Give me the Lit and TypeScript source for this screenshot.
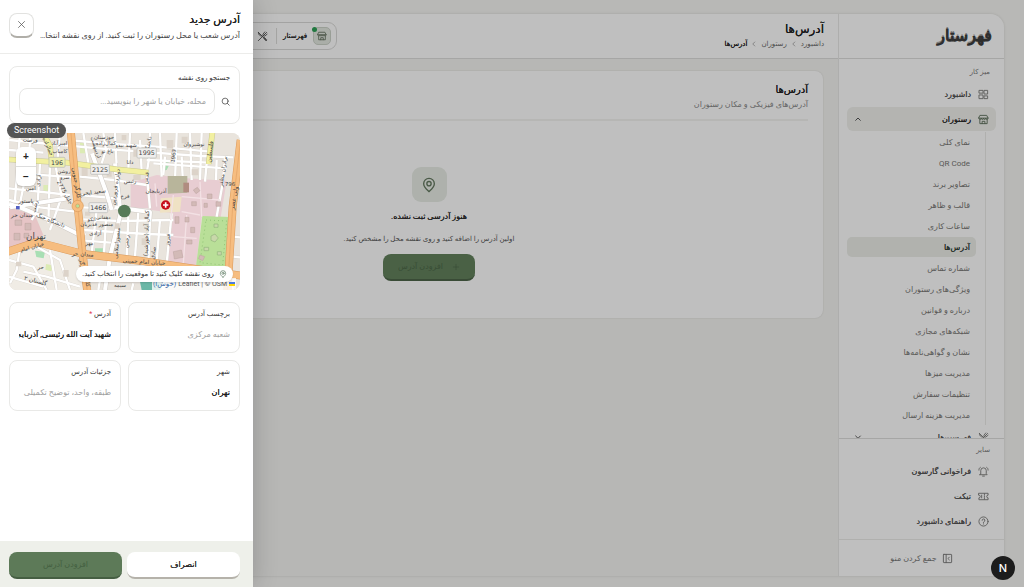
import { LitElement, html, svg, css, nothing } from "lit";
import { customElement } from "lit/decorators.js";
import { classMap } from "lit/directives/class-map.js";

const shapes = {
  grid: svg`<rect x="3" y="3" width="8" height="6"/><rect x="14" y="3" width="7" height="8"/><rect x="3" y="13" width="8" height="8"/><rect x="14" y="15" width="7" height="6"/>`,
  store: svg`<path d="M5 3h14l3 6H2zM2 9c0 4 5 4 5 0 0 4 5 4 5 0 0 4 5 4 5 0 0 4 5 4 5 0M4 12v9h16v-9M9 21v-5h6v5"/>`,
  bell: svg`<path d="M6 17V10a6 6 0 0 1 12 0v7l2 2H4zM10 22h4M2 9c0-3 1-5 3-6M22 9c0-3-1-5-3-6"/>`,
  ticket: svg`<path d="M2 5h20v4a3 3 0 0 0 0 6v4H2v-4a3 3 0 0 0 0-6zM14 6v3M14 11v3M14 16v2M8 9v6"/>`,
  help: svg`<circle cx="12" cy="12" r="10"/><path d="M9 9.500a3 3 0 1 1 4 2.800c-1 .5-1 1-1 2M12 17v.6"/>`,
  collapse: svg`<rect x="3" y="3" width="18" height="18" rx="1"/><path d="M9 3v18M16 9l-3 3 3 3"/>`,
  utensils: svg`<path d="M3 3l18 18M21 3L3 21M3 3c0 5 3 8 7 8M17 2l-4 5c-1 3 1 5 4 4l5-4M19 5l-4 4M14 15l5 6 2-2-5-5"/>`,
  pin: svg`<path d="M12 22c-3-3-8-7-8-12a8 8 0 0 1 16 0c0 5-5 9-8 12z"/><circle cx="12" cy="10" r="3.200"/>`,
  search: svg`<circle cx="11" cy="11" r="8"/><path d="M17 17l5 5"/>`,
  close: svg`<path d="M4 4l16 16M20 4L4 20"/>`,
  plus: svg`<path d="M12 4v16M4 12h16"/>`,
  up: svg`<path d="M5 16l7-7 7 7"/>`,
  down: svg`<path d="M5 9l7 7 7-7"/>`,
  prev: svg`<path d="M15 4l-8 8 8 8"/>`,
};
type IconName = keyof typeof shapes;
const icon = (name: IconName, cls = "") =>
  html`<svg class="icon ${cls}" viewBox="0 0 24 24" aria-hidden="true">${shapes[name]}</svg>`;

const base = css`
  *, *::before, *::after { box-sizing: border-box; }
  :host { font-family: Roboto, "DejaVu Sans", sans-serif; color: #2b2b2b; }
  h1, h2, h3, p, ul, ol { margin: 0; padding: 0; list-style: none; font-weight: 400; }
  button, input { font: inherit; color: inherit; border: 0; background: none; padding: 0; margin: 0; }
  a { color: inherit; text-decoration: none; }
  .icon { display: block; flex: none; width: 11px; height: 11px; fill: none; stroke: currentColor; stroke-width: 2; stroke-linecap: round; stroke-linejoin: round; }
  .strong { text-shadow: 0 0 0 currentColor; }
`;

const restaurantPages = [
  "نمای کلی", "QR Code", "تصاویر برند", "قالب و ظاهر", "ساعات کاری", "آدرس‌ها", "شماره تماس",
  "ویژگی‌های رستوران", "درباره و قوانین", "شبکه‌های مجازی", "نشان و گواهی‌نامه‌ها", "مدیریت میزها",
  "تنظیمات سفارش", "مدیریت هزینه ارسال",
];

@customElement("side-nav")
class SideNav extends LitElement {
  static styles = [base, css`
    :host { display: flex; flex-direction: column; width: 166px; flex: none; background: #fff; border-left: 1px solid #e9e9e7; min-height: 0; }
    .brand { height: 45px; flex: none; padding: 0 12px; display: flex; align-items: center; border-bottom: 1px solid #dededc; }
    .logo { font-size: 16px; line-height: 24px; color: #3c3c3c; -webkit-text-stroke: 1px #3c3c3c; text-shadow: 0 -2px 0 #a8a8a8; }
    .menu { flex: 1; min-height: 0; overflow: hidden; padding: 7px 8px 0; }
    .caption { font-size: 7px; line-height: 12px; color: #777; padding: 0 6px; margin-bottom: 4px; }
    .item { display: flex; align-items: center; gap: 7px; height: 24px; padding: 0 7px; margin-bottom: 1px; border-radius: 6px; font-size: 8px; color: #555; }
    .item .icon { color: #7c7c7a; }
    .open { background: #f0f1ed; color: #2b2b2b; }
    .open .icon { color: #5d6e5a; }
    .item .chevron { width: 8px; height: 8px; margin-inline-start: auto; stroke-width: 3; color: #555; }
    .sub { margin: 0 10px 0 0; border-right: 1px solid #ebebe9; padding-right: 9px; display: grid; gap: 1px; }
    .page { display: block; height: 20px; line-height: 21px; padding: 0 6px; font-size: 8px; color: #777673; border-radius: 5px; }
    .current { background: #eceee9; color: #34423a; text-shadow: 0 0 0 currentColor; }
    .other { border-top: 1px solid #dededc; padding: 5px 8px 5px; flex: none; }
    .other .caption { margin-bottom: 3px; }
    .fold { flex: none; height: 37px; border-top: 1px solid #ebebe9; display: flex; align-items: center; justify-content: center; gap: 5px; font-size: 8px; color: #777; width: 100%; }
  `];
  render() {
    return html`
      <div class="brand"><a class="logo" href="#">فهرستار</a></div>
      <nav class="menu">
        <p class="caption">میز کار</p>
        <a class="item strong" href="#">${icon("grid")}داشبورد</a>
        <a class="item open strong" href="#">${icon("store")}رستوران ${icon("up", "chevron")}</a>
        <ul class="sub">
          ${restaurantPages.map((p) => html`<li><a href="#" class=${classMap({ page: true, current: p === "آدرس‌ها" })}>${p}</a></li>`)}
        </ul>
        <a class="item strong" href="#">${icon("utensils")}فهرست‌ها ${icon("down", "chevron")}</a>
      </nav>
      <nav class="other">
        <p class="caption">سایر</p>
        <a class="item strong" href="#">${icon("bell")}فراخوانی گارسون</a>
        <a class="item strong" href="#">${icon("ticket")}تیکت</a>
        <a class="item strong" href="#">${icon("help")}راهنمای داشبورد</a>
      </nav>
      <button class="fold">${icon("collapse")}جمع کردن منو</button>`;
  }
}

const local = [
  "M27 60L150 72L330 88L600 108L700 112", "M27 90L130 98", "M60 39L45 240L27 262", "M92 39L85 130L60 250", "M120 130L112 270L95 300",
  "M27 205L210 225", "M60 160L220 172", "M180 39L172 125", "M165 130L185 230L150 330", "M27 240L120 262L225 275", "M150 130L145 310",
  "M225 62L340 72L470 80L630 95", "M240 170L340 180L440 195", "M238 225L350 235", "M245 262L450 270", "M250 298L360 303L520 300",
  "M250 330L440 342L520 345", "M255 362L360 370", "M250 39L265 130", "M310 39L318 90L305 130", "M345 39L350 140", "M390 39L385 150", "M420 60L425 155",
  "M450 39L448 110L440 160L450 265", "M480 39L485 170", "M530 39L525 185", "M570 39L575 180", "M605 39L600 180", "M460 130L600 140L680 145",
  "M495 110L490 165", "M545 110L548 170", "M620 130L615 185", "M650 120L648 180", "M675 110L668 190L650 290", "M440 120L630 128",
  "M290 270L275 400", "M318 300L312 400", "M385 290L380 410", "M415 275L405 410", "M450 300L445 430", "M480 300L470 425", "M515 280L500 430",
  "M255 345L235 300", "M700 200L720 200", "M700 350L720 352", "M700 410L720 412", "M690 480L700 510", "M27 420L100 440L140 510", "M60 380L50 450L30 490",
  "M110 380L180 420L210 510", "M150 390L170 510", "M70 455L140 470L240 500", "M27 470L130 500", "M330 415L320 450", "M300 480L295 510", "M400 490L395 510",
];
const avenues = ["M27 252L60 262L150 300L240 345", "M345 130L362 280L330 410L315 510", "M276 100L320 220L335 270", "M345 262L450 276L448 305", "M30 262L205 235", "M500 440L490 510"];
const trunk = ["M212 30L233 258L247 395L262 515", "M20 396L110 366L250 402L420 422L730 468", "M722 60L698 260L682 515"];
const minor = ["M20 118L200 128L350 148L445 158", "M638 30L626 132", "M128 36L150 78L155 124"];

/* x, y, rotation, size, label */
const streets: [number, number, number, number, string][] = [
  [90, 66, 5, 16, "فرصت"], [178, 74, 0, 16, "امیرآباد"], [180, 100, 0, 16, "کامیاب"], [140, 82, 65, 16, "جمالزاده"],
  [312, 56, 0, 16, "خوزستان"], [318, 76, 0, 16, "کمال‌زاده"], [322, 98, 0, 16, "باغ نو"], [378, 80, 0, 16, "شهید بیدو"], [390, 132, 0, 16, "داتا"],
  [282, 84, 72, 16, "اردیبهشت"], [450, 76, -80, 16, "دانشگاه"], [582, 78, 0, 16, "نوشیروان"], [636, 96, -82, 18, "فلسطین"], [526, 108, -84, 16, "1963"],
  [674, 155, -82, 16, "برادران مظفر"], [690, 198, 0, 16, "796"], [708, 235, -80, 18, "ولی عصر"], [192, 160, 0, 15, "روشن"], [194, 178, 0, 15, "سرو"],
  [190, 220, 60, 16, "جلیل 2775"], [224, 190, 80, 18, "کارگر جنوبی"], [92, 210, 0, 16, "امین"], [120, 182, -82, 16, "آزادی"], [78, 250, 0, 17, "پاستور"],
  [352, 202, -82, 17, "دوازده فروردین"], [390, 190, 0, 16, "رئیس"], [375, 234, 0, 16, "فرخ"], [444, 175, -80, 16, "قدس"], [280, 222, -8, 17, "سعید ایجی"],
  [468, 220, 0, 17, "آذربایجان"], [310, 298, 0, 15, "دهقانی"], [275, 302, 0, 15, "انکو"], [290, 318, 0, 16, "منصور قدیریان"], [286, 346, 0, 16, "آزادی"],
  [268, 374, 0, 16, "مهر"], [356, 370, -85, 16, "منصوراسلامی"], [385, 365, -85, 16, "رحمن"], [445, 340, -88, 17, "کمال آباد (خورشید)"], [465, 400, -80, 16, "صادق"],
  [508, 360, -85, 16, "فیروز"], [150, 306, 22, 17, "دانشگاه جنگ"], [110, 260, -80, 16, "رشت"], [248, 408, 3, 17, "میدان حر"], [432, 431, 4, 17, "خیابان امام خمینی"],
  [98, 386, -16, 16, "خیابان امام"], [242, 438, 80, 17, "کارگر"], [256, 482, 80, 17, "کارگر"], [122, 446, 0, 16, "حر"], [105, 488, 15, 18, "گلستان ۲"], [360, 501, 0, 16, "سیمه"],
];

@customElement("place-map")
class PlaceMap extends LitElement {
  static styles = [base, css`
    :host { display: block; position: relative; height: 157px; border-radius: 8px; overflow: hidden; background: #efeae3; }
    .canvas { display: block; width: 100%; height: 100%; direction: ltr; }
    .canvas text { font-family: "DejaVu Sans", sans-serif; text-anchor: middle; fill: #444; }
    .line { fill: none; stroke-linejoin: round; }
    .square { fill: #4c55b5; }
    .zoom { position: absolute; left: 7px; top: 14px; width: 20px; background: #fff; border-radius: 6px; box-shadow: 0 1px 2px #0003; display: grid; }
    .step { height: 19px; font: 700 10px/19px "Liberation Sans", sans-serif; color: #222; }
    .step + .step { border-top: 1px solid #ddd; height: 20px; }
    .credit { position: absolute; right: 4px; bottom: 0; height: 12px; padding: 0 1px; background: #fffc; font-size: 7px; line-height: 12px; color: #555; display: flex; gap: 2px; align-items: center; direction: ltr; }
    .credit a { color: #3467a8; }
    .flag { width: 6px; height: 4px; background: linear-gradient(#4c7be1 50%, #ffd500 50%); }
    .hint { position: absolute; right: 7px; bottom: 8px; height: 16px; padding: 0 6px; border-radius: 8px; background: #fff; box-shadow: 0 1px 2px #0002; display: flex; align-items: center; gap: 5px; font-size: 7px; white-space: nowrap; color: #333; }
    .hint .icon { width: 8px; height: 8px; color: #55745a; }
  `];
  render() {
    const path = (list: string[], color: string, width: number) =>
      list.map((d) => svg`<path class="line" d=${d} stroke=${color} stroke-width=${width} />`);
    const shield = (x: number, y: number, w: number, n: string, fill: string) => svg`
      <rect x=${x - w / 2} y=${y - 15} width=${w} height="30" rx="3" fill=${fill} stroke="#b6b8b6" stroke-width="2"/>
      <text x=${x} y=${y + 7} font-size="19">${n}</text>`;
    return html`
      <svg class="canvas" viewBox="27 39 693 471" preserveAspectRatio="xMidYMid slice" role="img" aria-label="نقشه تهران">
        <rect x="0" y="0" width="760" height="560" fill="#e9e4dd"/>
        <path d="M27 395L110 375L230 405L250 510H27z" fill="#f0ece5"/>
        <path d="M27 262L105 285L130 345L90 368L27 385z" fill="#e6c5c6"/>
        <path d="M392 188L470 165L560 175L680 182L662 292H605L588 440L500 425L520 280L455 270L392 262z" fill="#e8cdd2"/>
        <path d="M607 288L692 291L678 446L588 438z" fill="#b9df98"/>
        <path d="M618 300L680 303L668 435L600 428z" fill="none" stroke="#8fc275" stroke-width="3" stroke-dasharray="3 9"/>
        <path d="M480 135L495 122L510 130L500 150L484 152zM285 385h25v15h-25zM105 392l30 3-4 20-22-4z" fill="#a8dfb4"/>
        <path d="M138 432l20 4-4 18-18-5zM130 195h20v25h-20zM240 65h20v35h-20z" fill="#dcebb4"/>
        <path d="M420 485H490L480 510H425z" fill="#6bb7a6"/>
        ${path(local, "#d6d1ca", 9)}${path(local, "#ffffff", 7)}
        ${path(avenues, "#cfcac4", 15)}${path(avenues, "#ffffff", 12)}
        <path d="M482 235L545 230L540 275L480 278z" fill="#efe2c4"/>
        <path d="M503 168H562V218L503 221z" fill="#b8b59b"/><rect x="550" y="188" width="17" height="29" fill="#b08c80"/>
        <path d="M465 190L470 260M520 225L512 300M545 230L660 240M600 185L605 290M545 275L600 285M520 350L590 355M560 285L550 430" class="line" stroke="#f3e1e4" stroke-width="4"/>
        <g fill="#d3bab7" stroke="#bba29f" stroke-width="1.500">
          <path d="M580 210l12-8 8 10-12 9zM622 222h14v14h-14zM648 245h14v14h-14zM612 250h10v12h-10zM575 245h14v12h-14zM555 292h12v14h-12zM525 290h12v20h-12zM572 322h12v16h-12zM520 395l24-5 5 22-26 5zM560 360h16v12h-16zM600 405l14 5-6 12-12-6z"/>
          <path d="M45 300h20v16H45zM75 310h18v20H75zM42 340h18v20H42zM72 340h14v14H72z"/>
        </g>
        <g fill="#c8d7aa" stroke="#93b37c" stroke-width="2"><path d="M633 348l12-6 10 12-10 12-12-5zM642 312h12v10h-12zM612 382h14v10h-14zM652 395h12v10h-12z"/></g>
        <g fill="#dcd3c9"><path d="M72 140h25v20H72zM245 140h18v28h-18zM320 155h15v15h-15zM400 165h22v15h-22zM400 90h16v20h-16zM500 60h20v26h-20zM545 50h18v20h-18zM575 148h20v18h-20zM255 275h16v12h-16zM425 355h14v20h-14zM345 310h14v16h-14zM48 425h16v14H48zM190 450h16v20h-16zM365 45h14v16h-14z"/></g>
        ${path(minor, "#c9c98f", 17)}${path(minor, "#f2f0a0", 14)}
        ${path(trunk, "#d99a5c", 24)}${path(trunk, "#f6bd80", 21)}
        <path class="line" d="M212 30L233 258L247 395L262 515M722 60L698 260L682 515" stroke="#e3a263" stroke-width="2"/>
        <circle cx="233" cy="258" r="17" fill="#f6bd80" stroke="#d99a5c" stroke-width="2"/><circle cx="233" cy="258" r="6" fill="#b9df98" stroke="#d99a5c" stroke-width="2"/>
        ${streets.map(([x, y, r, s, t]) => svg`<text x=${x} y=${y} font-size=${s} transform="rotate(${r} ${x} ${y})">${t}</text>`)}
        <text x="108" y="356" font-size="26">تهران</text>
        <rect x="48" y="258" width="11" height="10" fill="#5360c4"/><g class="square"><text x="66" y="292" font-size="17" fill="inherit">میدان حر</text></g>
        ${shield(171, 127, 48, "196", "#eef0ae")}${shield(300, 148, 56, "2125", "#f0efed")}${shield(440, 99, 58, "1995", "#f0efed")}${shield(295, 263, 56, "1466", "#f0efed")}
        <circle cx="497" cy="255" r="14" fill="#c60e1b"/><path d="M497 247v16M489 255h16" stroke="#fff" stroke-width="5"/>
        <circle cx="373" cy="273" r="19" fill="#577a57"/>
      </svg>
      <div class="zoom"><button class="step" aria-label="بزرگ‌نمایی">+</button><button class="step" aria-label="کوچک‌نمایی">−</button></div>
      <div class="credit"><a href="#">(خوش‌آ)</a><span>Leaflet | © OSM</span><i class="flag"></i></div>
      <p class="hint">${icon("pin")}روی نقشه کلیک کنید تا موقعیت را انتخاب کنید.</p>`;
  }
}

@customElement("address-drawer")
class AddressDrawer extends LitElement {
  static styles = [base, css`
    :host { display: flex; flex-direction: column; background: #fff; }
    .head { display: flex; align-items: center; gap: 4px; height: 54px; padding: 2px 13px 0 9px; border-bottom: 1px solid #ececea; flex: none; }
    .titles { flex: 1; min-width: 0; }
    .title { font-size: 11px; line-height: 16px; color: #222; }
    .lead { font-size: 8px; line-height: 16px; color: #444; white-space: nowrap; overflow: hidden; text-overflow: ellipsis; }
    .close { width: 25px; height: 25px; margin-bottom: 5px; border: 1px solid #e2e2e0; border-bottom: 2px solid #b0aea8; border-radius: 8px; display: grid; place-items: center; flex: none; color: #555; }
    .close .icon { width: 9px; height: 9px; }
    .body { flex: 1; min-height: 0; overflow: hidden; padding: 12px 13px 12px 9px; }
    .box { border: 1px solid #e9e9e7; border-radius: 8px; padding: 5px 9px; min-width: 0; }
    .label { display: block; font-size: 7px; line-height: 13px; color: #333; }
    .finder { height: 58px; margin-bottom: 9px; }
    .row { display: flex; align-items: center; gap: 6px; margin-top: 3px; }
    .row .icon { width: 9px; height: 9px; color: #444; }
    .query { flex: 1; min-width: 0; height: 27px; border: 1px solid #e6e6e4; border-radius: 8px; padding: 0 8px; font-size: 8px; }
    .fields { display: grid; grid-template-columns: 1fr 1fr; gap: 7px; margin-top: 12px; }
    .field { height: 51px; }
    .value { width: 100%; height: 20px; margin-top: 3px; font-size: 8px; display: block; color: #1e1e1e; }
    .query:focus, .value:focus { outline: 0; }
    ::placeholder { color: #a0a0a0; opacity: 1; text-shadow: none; }
    .req { color: #e03b4a; }
    .foot { height: 46px; flex: none; background: #eef0ea; padding: 11px 13px 8px 9px; display: grid; grid-template-columns: 1fr 1fr; gap: 5px; }
    .btn { border-radius: 8px; font-size: 8px; background: #fff; border-bottom: 2px solid #b5b2aa; }
    .save { background: #5d7a58; border-bottom-color: #455e42; color: #446041; }
  `];
  private field(id: string, label: string, value: string, hint = "", required = false) {
    return html`<div class="box field">
      <label class="label" for=${id}>${label}${required ? html`<span class="req"> *</span>` : nothing}</label>
      <input class="value strong" id=${id} .value=${value} placeholder=${hint} ?required=${required} />
    </div>`;
  }
  render() {
    return html`
      <header class="head">
        <div class="titles">
          <h2 class="title strong">آدرس جدید</h2>
          <p class="lead">آدرس شعب یا محل رستوران را ثبت کنید. از روی نقشه انتخاب کنید یا جستجو کنید.</p>
        </div>
        <button class="close" aria-label="بستن">${icon("close")}</button>
      </header>
      <div class="body">
        <div class="box finder">
          <label class="label" for="query">جستجو روی نقشه</label>
          <div class="row">${icon("search")}<input class="query" id="query" placeholder="محله، خیابان یا شهر را بنویسید..." /></div>
        </div>
        <place-map></place-map>
        <div class="fields">
          ${this.field("tag", "برچسب آدرس", "", "شعبه مرکزی")}
          ${this.field("address", "آدرس", "شهید آیت الله رئیسی, آذربایجان, تهران", "", true)}
          ${this.field("city", "شهر", "تهران")}
          ${this.field("detail", "جزئیات آدرس", "", "طبقه، واحد، توضیح تکمیلی")}
        </div>
      </div>
      <footer class="foot">
        <button class="btn strong">انصراف</button>
        <button class="btn save">افزودن آدرس</button>
      </footer>`;
  }
}

@customElement("app-root")
class AppRoot extends LitElement {
  static styles = [base, css`
    :host { display: block; position: relative; height: 100vh; overflow: hidden; background: #f6f6f3; }
    .frame { height: 100%; padding: 14px 20px 11px 20px; }
    .shell { height: 100%; display: flex; border-radius: 14px 14px 0 0; overflow: hidden; background: #f5f5f2; box-shadow: 0 0 3px #0002; }
    .main { flex: 1; min-width: 0; }
    .top { height: 45px; padding: 0 14px 0 15px; display: flex; align-items: center; justify-content: space-between; background: #fff; border-bottom: 1px solid #dededc; }
    .heading { font-size: 12px; line-height: 16px; color: #222; }
    .crumbs { display: flex; align-items: center; gap: 4px; font-size: 7px; line-height: 14px; color: #666; }
    .crumbs .icon { width: 6px; height: 6px; }
    .here { color: #222; }
    .venue { flex: 0 0 302px; height: 28px; border: 1px solid #dadad8; border-radius: 9px; display: flex; align-items: center; gap: 6px; padding: 0 5px; font-size: 7px; }
    .badge { width: 18px; height: 18px; position: relative; border: 1px solid #ccd3c9; background: #e3e8e0; border-radius: 5px; display: grid; place-items: center; color: #60705d; }
    .badge .icon { width: 10px; height: 10px; }
    .dot { position: absolute; left: -2px; top: -1px; width: 5px; height: 5px; border-radius: 50%; background: #2da056; }
    .rule { width: 1px; height: 16px; background: #dcdcda; }
    .tools { padding-right: 2px; color: #555; }
    .content { padding: 12px 15px; }
    .card { background: #fff; border-radius: 8px; box-shadow: 0 0 2px #0002; padding: 11px 15px 37px; }
    .name { font-size: 10px; line-height: 16px; color: #222; }
    .note { font-size: 8px; line-height: 14px; color: #888; padding-bottom: 7px; border-bottom: 2px solid #f3f3f1; }
    .empty { display: flex; flex-direction: column; align-items: center; padding-top: 46px; }
    .mark { width: 35px; height: 35px; border-radius: 9px; background: #e8ede6; display: grid; place-items: center; color: #63785f; }
    .mark .icon { width: 16px; height: 16px; }
    .none { font-size: 8px; line-height: 16px; margin-top: 7px; }
    .tip { font-size: 7px; line-height: 14px; color: #555; margin-top: 7px; }
    .add { margin-top: 8px; width: 92px; height: 27px; border-radius: 8px; background: #63825d; border-bottom: 2px solid #4c6548; color: #4c6848; font-size: 8px; display: flex; align-items: center; justify-content: center; gap: 9px; }
    .add .icon { width: 8px; height: 8px; }
    .shade { position: absolute; inset: 0; background: #00000040; }
    .drawer { position: absolute; left: 0; top: 0; bottom: 0; width: 253px; max-width: 100%; box-shadow: 0 0 24px #0003; }
    .float { position: absolute; left: 7px; top: 123px; height: 15px; padding: 0 7px; border-radius: 8px; background: #555; color: #fff; font: 9px/15px Roboto, sans-serif; }
    .dev { position: absolute; right: 9px; bottom: 7px; width: 24px; height: 24px; border-radius: 50%; background: #1c1c1c; color: #fff; font: 500 11px/24px Inter, sans-serif; text-align: center; }
  `];
  connectedCallback() {
    super.connectedCallback();
    this.dir = "rtl";
    this.lang = "fa";
  }
  render() {
    return html`
      <div class="frame"><div class="shell">
        <side-nav></side-nav>
        <main class="main">
          <header class="top">
            <div>
              <h1 class="heading strong">آدرس‌ها</h1>
              <nav class="crumbs"><a href="#">داشبورد</a>${icon("prev")}<a href="#">رستوران</a>${icon("prev")}<span class="here strong">آدرس‌ها</span></nav>
            </div>
            <div class="venue">
              <span class="badge">${icon("store")}<i class="dot"></i></span><span class="strong">فهرستار</span><i class="rule"></i><span class="tools">${icon("utensils")}</span>
            </div>
          </header>
          <div class="content"><section class="card">
            <h2 class="name strong">آدرس‌ها</h2>
            <p class="note">آدرس‌های فیزیکی و مکان رستوران</p>
            <div class="empty">
              <span class="mark">${icon("pin")}</span>
              <h3 class="none strong">هنوز آدرسی ثبت نشده.</h3>
              <p class="tip">اولین آدرس را اضافه کنید و روی نقشه محل را مشخص کنید.</p>
              <button class="add">${icon("plus")}افزودن آدرس</button>
            </div>
          </section></div>
        </main>
      </div></div>
      <div class="shade"></div>
      <address-drawer class="drawer"></address-drawer>
      <span class="float" dir="ltr">Screenshot</span>
      <button class="dev" aria-label="ابزار توسعه">N</button>`;
  }
}
